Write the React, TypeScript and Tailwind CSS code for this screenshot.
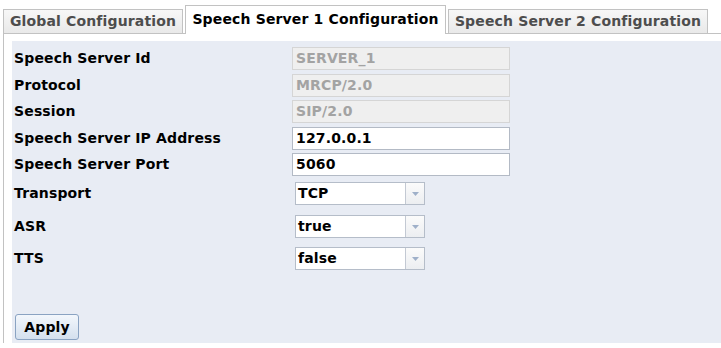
import React, { useState } from 'react';

// ─── 資料 ──────────────────────────────────────────────────

const TABS = ['Global Configuration', 'Speech Server 1 Configuration', 'Speech Server 2 Configuration'];

const TEXT_FIELDS = [
    { label: 'Speech Server Id', value: 'SERVER_1', disabled: true, mt: 'mt-[6px]' },
    { label: 'Protocol', value: 'MRCP/2.0', disabled: true, mt: 'mt-[4px]' },
    { label: 'Session', value: 'SIP/2.0', disabled: true, mt: 'mt-[3px]' },
    { label: 'Speech Server IP Address', value: '127.0.0.1', disabled: false, mt: 'mt-[4px]' },
    { label: 'Speech Server Port', value: '5060', disabled: false, mt: 'mt-[3px]' },
];

const SELECT_FIELDS = [
    { label: 'Transport', value: 'TCP', mt: 'mt-[6px]' },
    { label: 'ASR', value: 'true', mt: 'mt-[10px]' },
    { label: 'TTS', value: 'false', mt: 'mt-[9px]' },
];

const FONT = { fontFamily: '"DejaVu Sans", Verdana, sans-serif' };

// ─── 元件 ──────────────────────────────────────────────────

const ComboBox: React.FC<{ value: string }> = ({ value }) => (
    <div className="ml-[3px] flex h-[23px] w-[130px] border border-[#b5bdc9] bg-white">
        <div className="flex flex-1 items-center pl-[2px] text-[14px] font-bold tracking-[0.15px] text-black">{value}</div>
        <div className="flex w-[19px] items-center justify-center border-l border-[#c3c9d3] bg-gradient-to-b from-[#fbfbfb] to-[#eceef1]">
            <svg width="7" height="4" viewBox="0 0 7 4">
                <path d="M0 0h7L3.5 4z" fill="#9fb0c9" />
            </svg>
        </div>
    </div>
);

export default function App() {
    const [active, setActive] = useState(1);

    return (
        <div className="h-[348px] w-[721px] overflow-hidden bg-white pl-[3px]" style={FONT}>
            {/* 分頁列 */}
            <div className="flex h-[33px] items-end gap-[2px] pt-[4px]">
                {TABS.map((tab, i) =>
                    i === active ? (
                        <button
                            key={tab}
                            onClick={() => setActive(i)}
                            className="relative z-10 -mb-px flex h-[29px] w-[261px] items-center justify-center whitespace-nowrap border border-b-0 border-[#c2c2c2] bg-white pb-[2px] text-[14px] font-bold tracking-[0.15px] text-black"
                        >
                            {tab}
                        </button>
                    ) : (
                        <button
                            key={tab}
                            onClick={() => setActive(i)}
                            className={`flex h-[24px] items-center justify-center whitespace-nowrap border border-b-0 border-[#c2c2c2] bg-gradient-to-b from-[#f7f7f7] to-[#e9e9e9] text-[14px] font-bold tracking-[0.15px] text-[#4d4d4d] ${
                                i === 0 ? 'w-[180px]' : 'w-[260px]'
                            }`}
                        >
                            {tab}
                        </button>
                    )
                )}
            </div>

            {/* 內容面板 */}
            <div className="border-l border-t border-[#c2c2c2] pl-[8px] pt-[7px]">
                <div className="flex h-[302px] flex-col bg-[#e8ecf4] pl-[2px]">
                    {TEXT_FIELDS.map(f => (
                        <div key={f.label} className={`flex h-[23px] items-center ${f.mt}`}>
                            <div className="w-[278px] text-[14px] font-bold tracking-[0.15px] text-black">{f.label}</div>
                            <div
                                className={`flex h-[23px] w-[218px] items-center border pl-[3px] text-[14px] font-bold tracking-[0.15px] ${
                                    f.disabled
                                        ? 'border-[#d5d5d5] bg-[#efefef] text-[#a3a3a3]'
                                        : 'border-[#b3bac5] bg-white text-black'
                                }`}
                            >
                                {f.value}
                            </div>
                        </div>
                    ))}

                    {SELECT_FIELDS.map(f => (
                        <div key={f.label} className={`flex h-[23px] items-center ${f.mt}`}>
                            <div className="w-[278px] text-[14px] font-bold tracking-[0.15px] text-black">{f.label}</div>
                            <ComboBox value={f.value} />
                        </div>
                    ))}

                    <div className="flex-1" />

                    <div className="mb-[3px] ml-[1px]">
                        <button className="flex h-[26px] w-[64px] items-center justify-center rounded-[3px] border border-[#8aa3c2] bg-gradient-to-b from-[#f3f7fc] to-[#d4e0ee] text-[14px] font-bold tracking-[0.15px] text-black">
                            Apply
                        </button>
                    </div>
                </div>
            </div>
        </div>
    );
}
